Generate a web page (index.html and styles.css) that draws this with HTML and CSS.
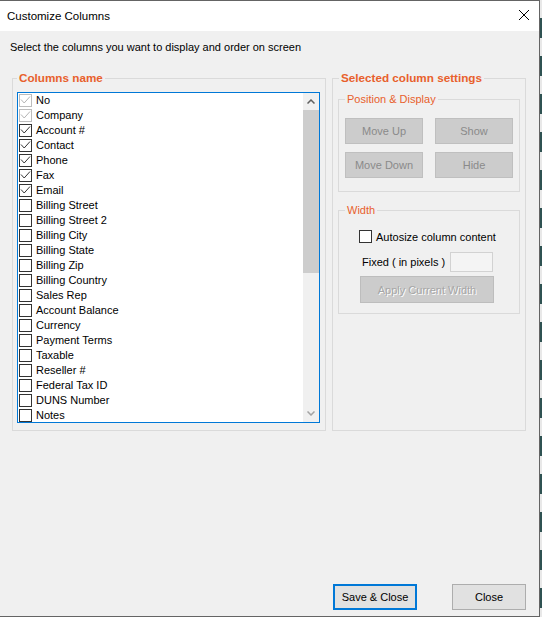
FILE: index.html
```html
<!DOCTYPE html>
<html lang="en">
<head>
<meta charset="utf-8">
<title>Customize Columns</title>
<link rel="stylesheet" href="styles.css">
</head>
<body>
<div class="dialog">
  <div class="titlebar">
    <span class="title">Customize Columns</span>
    <svg class="close" width="10" height="10" viewBox="0 0 10 10"><path d="M0 0L10 10M10 0L0 10" stroke="#000" stroke-width="1" fill="none"/></svg>
  </div>
  <div class="content">
    <p class="intro">Select the columns you want to display and order on screen</p>
    <div class="groups">
      <fieldset class="group group-columns">
        <legend class="legend-main">Columns name</legend>
        <div class="listbox">
          <ul class="items">
            <li class="item"><span class="cb cb-dis"><svg viewBox="0 0 11 11"><path d="M1 4.5L4.2 8L10 1.5" stroke="#b4b4b4" fill="none"/></svg></span>No</li>
            <li class="item"><span class="cb cb-dis"><svg viewBox="0 0 11 11"><path d="M1 4.5L4.2 8L10 1.5" stroke="#b4b4b4" fill="none"/></svg></span>Company</li>
            <li class="item"><span class="cb"><svg viewBox="0 0 11 11"><path d="M1 4.5L4.2 8L10 1.5" stroke="#333" fill="none"/></svg></span>Account #</li>
            <li class="item"><span class="cb"><svg viewBox="0 0 11 11"><path d="M1 4.5L4.2 8L10 1.5" stroke="#333" fill="none"/></svg></span>Contact</li>
            <li class="item"><span class="cb"><svg viewBox="0 0 11 11"><path d="M1 4.5L4.2 8L10 1.5" stroke="#333" fill="none"/></svg></span>Phone</li>
            <li class="item"><span class="cb"><svg viewBox="0 0 11 11"><path d="M1 4.5L4.2 8L10 1.5" stroke="#333" fill="none"/></svg></span>Fax</li>
            <li class="item"><span class="cb"><svg viewBox="0 0 11 11"><path d="M1 4.5L4.2 8L10 1.5" stroke="#333" fill="none"/></svg></span>Email</li>
            <li class="item"><span class="cb"></span>Billing Street</li>
            <li class="item"><span class="cb"></span>Billing Street 2</li>
            <li class="item"><span class="cb"></span>Billing City</li>
            <li class="item"><span class="cb"></span>Billing State</li>
            <li class="item"><span class="cb"></span>Billing Zip</li>
            <li class="item"><span class="cb"></span>Billing Country</li>
            <li class="item"><span class="cb"></span>Sales Rep</li>
            <li class="item"><span class="cb"></span>Account Balance</li>
            <li class="item"><span class="cb"></span>Currency</li>
            <li class="item"><span class="cb"></span>Payment Terms</li>
            <li class="item"><span class="cb"></span>Taxable</li>
            <li class="item"><span class="cb"></span>Reseller #</li>
            <li class="item"><span class="cb"></span>Federal Tax ID</li>
            <li class="item"><span class="cb"></span>DUNS Number</li>
            <li class="item"><span class="cb"></span>Notes</li>
          </ul>
          <div class="scrollbar">
            <div class="sb-arrow"><svg width="8" height="5" viewBox="0 0 8 5"><path d="M0.5 4.5L4 1L7.5 4.5" stroke="#606060" stroke-width="1.5" fill="none"/></svg></div>
            <div class="sb-thumb"></div>
            <div class="sb-track"></div>
            <div class="sb-arrow"><svg width="8" height="5" viewBox="0 0 8 5"><path d="M0.5 0.5L4 4L7.5 0.5" stroke="#a3a3a3" stroke-width="1.5" fill="none"/></svg></div>
          </div>
        </div>
      </fieldset>
      <fieldset class="group group-settings">
        <legend class="legend-main legend-settings">Selected column settings</legend>
        <fieldset class="subgroup sub-position">
          <legend class="legend-sub">Position &amp; Display</legend>
          <div class="btn-grid">
            <button class="btn-dis" type="button">Move Up</button>
            <button class="btn-dis" type="button">Show</button>
            <button class="btn-dis" type="button">Move Down</button>
            <button class="btn-dis" type="button">Hide</button>
          </div>
        </fieldset>
        <fieldset class="subgroup sub-width">
          <legend class="legend-sub">Width</legend>
          <div class="autosize"><span class="cb"></span><span>Autosize column content</span></div>
          <div class="fixed"><span class="fixed-label">Fixed ( in pixels )</span><span class="fixed-input"></span></div>
          <button class="apply" type="button">Apply Current Width</button>
        </fieldset>
      </fieldset>
    </div>
  </div>
  <div class="footer">
    <button class="btn btn-default" type="button">Save &amp; Close</button>
    <button class="btn btn-close" type="button">Close</button>
  </div>
</div>
</body>
</html>
```
FILE: styles.css
```css
html, body {
  margin: 0;
  padding: 0;
}
body {
  width: 542px;
  height: 617px;
  overflow: hidden;
  background: repeating-linear-gradient(to bottom, #e8e8e8 0 18px, #2f5252 18px 38px);
  font-family: "Liberation Sans", Arial, sans-serif;
  font-size: 11px;
  color: #000;
}
.dialog {
  box-sizing: border-box;
  width: 540px;
  height: 617px;
  background: #f0f0f0;
  border: 1px solid #646464;
  border-left: 0;
  display: flex;
  flex-direction: column;
}
.titlebar {
  flex-shrink: 0;
  height: 30px;
  background: #fff;
  display: flex;
  align-items: center;
  padding-left: 7px;
}
.title {
  font-size: 11.5px;
  line-height: 14px;
}
.close {
  margin-left: auto;
  margin-right: 10px;
  margin-bottom: 2px;
}
.content {
  padding-top: 10px;
}
.intro {
  margin: 0 0 17px 10px;
  line-height: 13px;
}
.groups {
  display: flex;
  padding-left: 12px;
  gap: 6px;
}
fieldset {
  margin: 0;
  min-width: 0;
  border: 1px solid #dadada;
}
legend {
  padding: 0 2px;
}
.group {
  box-sizing: border-box;
}
.group-columns {
  width: 314px;
  padding: 7px 5px 7px 4px;
}
.group-settings {
  width: 194px;
  padding: 7px 5px 0 5px;
}
.legend-main {
  font-weight: bold;
  font-size: 11.7px;
  line-height: 14px;
  color: #e8602c;
  white-space: nowrap;
}
.legend-settings {
  margin-left: 1px;
}
.listbox {
  box-sizing: border-box;
  height: 331px;
  display: flex;
  border: 1px solid #0078d7;
  background: #fff;
}
.items {
  flex: 1;
  list-style: none;
  margin: 0;
  padding: 0;
  overflow: hidden;
}
.item {
  display: flex;
  align-items: center;
  height: 15px;
  gap: 4px;
  padding-left: 1px;
  white-space: nowrap;
  line-height: 13px;
}
.cb {
  box-sizing: border-box;
  flex-shrink: 0;
  width: 13px;
  height: 13px;
  border: 1px solid #333;
  background: #fff;
  display: flex;
}
.cb svg {
  width: 11px;
  height: 11px;
}
.cb-dis {
  border-color: #bcbcbc;
}
.scrollbar {
  width: 16px;
  display: flex;
  flex-direction: column;
  background: #f0f0f0;
}
.sb-arrow {
  height: 17px;
  display: flex;
  align-items: center;
  justify-content: center;
}
.sb-thumb {
  height: 163px;
  background: #cdcdcd;
}
.sb-track {
  flex: 1;
}
.subgroup {
  padding: 12px 6px 13px 6px;
}
.legend-sub {
  font-size: 11px;
  line-height: 14px;
  color: #e8602c;
}
.btn-grid {
  display: grid;
  grid-template-columns: 78px 78px;
  column-gap: 12px;
  row-gap: 8px;
}
button {
  font-family: "Liberation Sans", Arial, sans-serif;
  font-size: 11px;
  padding: 0;
  margin: 0;
  box-sizing: border-box;
}
.btn-dis {
  height: 26px;
  background: #cccccc;
  border: 1px solid #bfbfbf;
  color: #8a8a8a;
}
.sub-width {
  margin-top: 11px;
  padding: 13px 6px 10px 6px;
}
.autosize {
  display: flex;
  align-items: center;
  gap: 4px;
  height: 13px;
  margin-left: 14px;
  white-space: nowrap;
}
.fixed {
  display: flex;
  align-items: center;
  gap: 5px;
  height: 20px;
  margin: 9px 0 0 17px;
  white-space: nowrap;
}
.fixed-input {
  box-sizing: border-box;
  width: 43px;
  height: 20px;
  border: 1px solid #d2d2d2;
  background: #f4f4f4;
}
.apply {
  display: block;
  width: 134px;
  height: 27px;
  margin: 4px 0 0 15px;
  background: #cccccc;
  border: 1px solid #bdbdbd;
  color: #a6a6a6;
  text-shadow: 1px 1px 0 #fff;
}
.footer {
  margin-top: auto;
  display: flex;
  justify-content: flex-end;
  gap: 35px;
  padding: 0 13px 6px 0;
}
.btn {
  height: 26px;
  background: #e1e1e1;
  border: 1px solid #adadad;
  color: #000;
}
.btn-default {
  width: 84px;
  border: 2px solid #0078d7;
}
.btn-close {
  width: 74px;
}
```
